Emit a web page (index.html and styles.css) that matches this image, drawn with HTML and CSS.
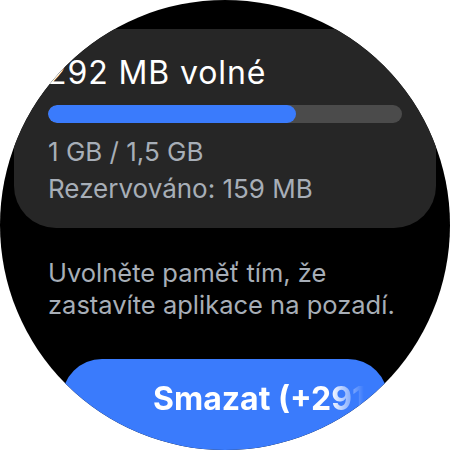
FILE: index.html
```html
<!DOCTYPE html>
<html lang="cs">
<head>
    <meta charset="UTF-8">
    <meta name="viewport" content="width=device-width, initial-scale=1.0">
    <title>Paměť</title>
    <link rel="stylesheet" href="styles.css">
</head>
<body>
    <div class="watch">
        <div class="memory-card">
            <div class="free">292 MB volné</div>
            <div class="bar">
                <div class="bar-fill" style="width: 70%"></div>
            </div>
            <div class="details">
                <div>1 GB / 1,5 GB</div>
                <div>Rezervováno: 159 MB</div>
            </div>
        </div>

        <p class="hint">Uvolněte paměť tím, že zastavíte aplikace na pozadí.</p>

        <button class="clear">
            <span class="clear-label">Smazat (+291 MB)</span>
        </button>
    </div>
</body>
</html>
```

FILE: styles.css
```css
body {
    margin: 0;
    background: #fff;
    font-family: 'Inter', 'Noto Sans', sans-serif;
}

.watch {
    width: 450px;
    height: 450px;
    border-radius: 50%;
    background: #000;
    overflow: hidden;
    display: flex;
    flex-direction: column;
}

.watch > * {
    flex-shrink: 0;
}

.memory-card {
    margin: 29px 14px 0;
    height: 199px;
    box-sizing: border-box;
    padding: 25px 34px 0;
    background: #262626;
    border-radius: 0 0 42px 42px;
}

.free {
    color: #fff;
    font-size: 32px;
    line-height: 38px;
    letter-spacing: 0.9px;
    margin-left: -1px;
}

.bar {
    margin-top: 13px;
    height: 18px;
    border-radius: 9px;
    background: #4b4b4b;
    overflow: hidden;
}

.bar-fill {
    height: 100%;
    border-radius: 9px;
    background: #3a7bfc;
}

.details {
    margin-top: 10px;
    color: #a7aeb7;
    font-size: 26px;
    line-height: 37px;
}

.hint {
    margin: 29px 40px 0 48px;
    color: #a7aeb7;
    font-size: 25.5px;
    line-height: 32px;
}

.clear {
    margin: 38px 62px 0;
    height: 120px;
    border: none;
    border-radius: 40px;
    background: #3a7bfc;
    padding: 0;
    display: flex;
    justify-content: flex-start;
    align-items: flex-start;
    font-family: inherit;
}

.clear-label {
    display: block;
    margin: 20px 0 0 91px;
    width: 211px;
    overflow: hidden;
    white-space: nowrap;
    color: #fff;
    font-size: 32px;
    font-weight: bold;
    line-height: 40px;
    -webkit-mask-image: linear-gradient(to right, #000 84%, transparent 100%);
    mask-image: linear-gradient(to right, #000 84%, transparent 100%);
}
```
